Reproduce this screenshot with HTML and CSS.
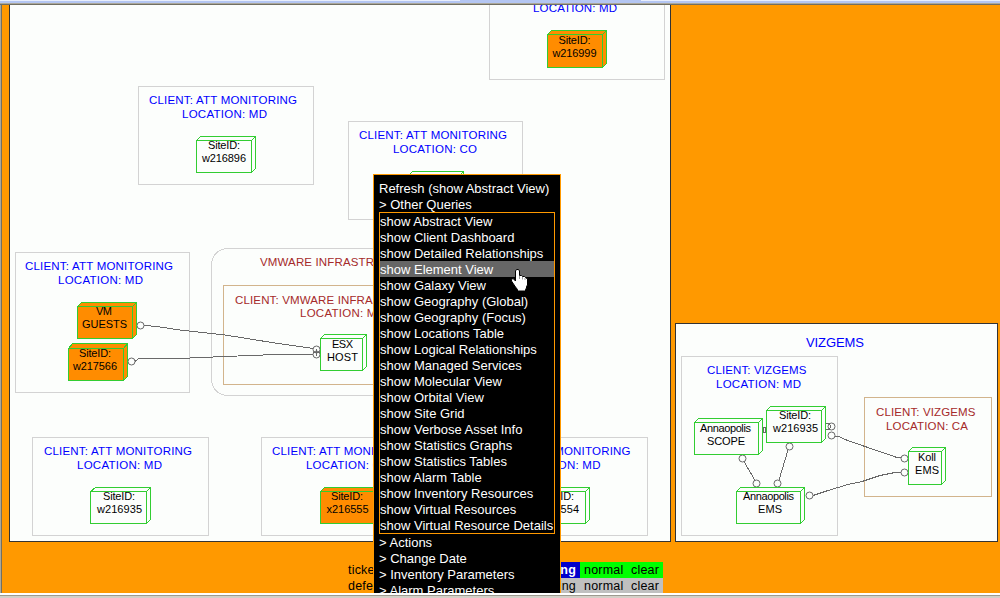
FILE: index.html
```html
<!DOCTYPE html>
<html lang="en">
<head>
<meta charset="utf-8">
<title>Abstract View</title>
<link rel="stylesheet" href="styles.css">
</head>
<body>
<div class="window">
  <div class="topbar"><div class="tab"></div></div>
  <main class="view">
    <svg class="graph" viewBox="2 5 998 557" width="998" height="557">
      <g class="panel">
        <rect x="9.5" y="0.5" width="661" height="541"/>
        <rect x="675.5" y="323.5" width="322" height="218"/>
      </g>
      <g class="group">
        <rect x="489.5" y="0.5" width="175" height="79"/>
        <rect x="138.5" y="86.5" width="175" height="98"/>
        <rect x="348.5" y="121.5" width="174" height="98"/>
        <rect x="15.5" y="252.5" width="174" height="140"/>
        <rect x="211.5" y="248.5" width="230" height="147" rx="16"/>
        <rect x="32.5" y="437.5" width="176" height="98"/>
        <rect x="261.5" y="437.5" width="176" height="98"/>
        <rect x="471.5" y="437.5" width="176" height="98"/>
        <rect x="681.5" y="356.5" width="156" height="179"/>
        <rect class="tan" x="223.5" y="285.5" width="206" height="99"/>
        <rect class="tan" x="864.5" y="397.5" width="127" height="99"/>
      </g>
      <g class="edge">
        <path d="M144 325.5L157 326.5L180 330L225 335L275 343L313 348.5"/>
        <path d="M135 361.5L139 358.5H179L225 356.5L276 354.5H313"/>
        <path d="M744 461.5L755 480.5M788 450L779 480M835 436.5H839L845 439.5L865 446.5L897 457.5H901"/>
        <path d="M813 495.5L828 490.5L848 484.5L862 481.5L880 475.5L895 472.5H901"/>
        <circle cx="140.5" cy="325.5" r="3.5"/><circle cx="131.5" cy="361.5" r="3.5"/>
        <circle cx="316.5" cy="349.5" r="3.5"/><circle cx="316.5" cy="354.5" r="3.5"/>
        <path d="M313 352.5H320M316.5 349V356"/>
        <circle cx="742.5" cy="458.5" r="3.5"/><circle cx="756.5" cy="483.5" r="3.5"/>
        <circle cx="777.5" cy="483.5" r="3.5"/><circle cx="789.5" cy="446.5" r="3.5"/>
        <circle cx="809.5" cy="495.5" r="3.5"/><circle cx="904.5" cy="458.5" r="3.5"/>
        <circle cx="904.5" cy="472.5" r="3.5"/><circle cx="831.5" cy="435.5" r="3.5"/>
        <circle cx="831.5" cy="426.5" r="3.5"/><path d="M826 423.5H829.5L830.5 426.5L829.5 429.5H826"/>
        <rect x="763.5" y="427.5" width="2" height="5"/>
      </g>
      <g class="node">
        <path class="alarm" d="M547.5 34.5L551.5 30.5H606.5V63.5L602.5 67.5H547.5Z"/><path d="M547.5 34.5H602.5V67.5M602.5 34.5L606.5 30.5"/>
        <path d="M196.5 140.5L200.5 136.5H255.5V168.5L251.5 172.5H196.5ZH251.5V172.5M251.5 140.5L255.5 136.5"/>
        <path d="M408.5 175.5L412.5 171.5H463.5V203.5L459.5 207.5H408.5ZH459.5V207.5M459.5 175.5L463.5 171.5"/>
        <path class="alarm" d="M77.5 306.5L81.5 302.5H136.5V334.5L132.5 338.5H77.5Z"/><path d="M77.5 306.5H132.5V338.5M132.5 306.5L136.5 302.5"/>
        <path class="alarm" d="M68.5 348.5L72.5 343.5H127.5V376.5L123.5 380.5H68.5Z"/><path d="M68.5 348.5H123.5V380.5M123.5 348.5L127.5 343.5"/>
        <path d="M320.5 338.5L324.5 334.5H366.5V366.5L362.5 370.5H320.5ZH362.5V370.5M362.5 338.5L366.5 334.5"/>
        <path d="M90.5 491.5L95.5 487.5H150.5V519.5L146.5 523.5H90.5ZH146.5V523.5M146.5 491.5L150.5 487.5"/>
        <path class="alarm" d="M320.5 491.5L324.5 487.5H379.5V519.5L375.5 523.5H320.5ZH375.5V523.5"/>
        <path d="M530.5 491.5L534.5 487.5H589.5V519.5L585.5 523.5H530.5ZH585.5V523.5M585.5 491.5L589.5 487.5"/>
        <path d="M694.5 422.5L698.5 418.5H762.5V450.5L758.5 454.5H694.5ZH758.5V454.5M758.5 422.5L762.5 418.5"/>
        <path d="M766.5 410.5L770.5 406.5H825.5V438.5L821.5 442.5H766.5ZH821.5V442.5M821.5 410.5L825.5 406.5"/>
        <path d="M736.5 491.5L740.5 487.5H804.5V519.5L800.5 523.5H736.5ZH800.5V523.5M800.5 491.5L804.5 487.5"/>
        <path d="M908.5 451.5L912.5 447.5H945.5V480.5L941.5 484.5H908.5ZH941.5V484.5M941.5 451.5L945.5 447.5"/>
      </g>
      <g class="title">
        <text x="533" y="12" textLength="84">LOCATION: MD</text>
        <text x="149" y="104" textLength="148">CLIENT: ATT MONITORING</text>
        <text x="182" y="118" textLength="85">LOCATION: MD</text>
        <text x="359" y="139" textLength="148">CLIENT: ATT MONITORING</text>
        <text x="393" y="153" textLength="84">LOCATION: CO</text>
        <text x="25" y="270" textLength="148">CLIENT: ATT MONITORING</text>
        <text x="58" y="284" textLength="85">LOCATION: MD</text>
        <text x="44" y="455" textLength="148">CLIENT: ATT MONITORING</text>
        <text x="77" y="469" textLength="85">LOCATION: MD</text>
        <text x="272" y="455" textLength="148">CLIENT: ATT MONITORING</text>
        <text x="306" y="469" textLength="84">LOCATION: CO</text>
        <text x="482.5" y="455" textLength="148">CLIENT: ATT MONITORING</text>
        <text x="515.5" y="469" textLength="85">LOCATION: MD</text>
        <text class="big" x="806" y="347" textLength="58">VIZGEMS</text>
        <text x="707" y="374" textLength="99.5">CLIENT: VIZGEMS</text>
        <text x="716" y="388" textLength="85">LOCATION: MD</text>
        <g class="red">
          <text class="wide" x="260" y="266">VMWARE INFRASTRUCTURE</text>
          <text class="wide" x="235" y="304">CLIENT: VMWARE INFRASTRUCTURE</text>
          <text x="300" y="317" textLength="85">LOCATION: MD</text>
          <text x="876" y="416" textLength="99.5">CLIENT: VIZGEMS</text>
          <text x="886" y="430" textLength="82">LOCATION: CA</text>
        </g>
      </g>
      <g class="label">
        <text x="558.5" y="44" textLength="32">SiteID:</text><text x="552.5" y="57" textLength="44">w216999</text>
        <text x="208" y="149" textLength="32">SiteID:</text><text x="202" y="162" textLength="44">w216896</text>
        <text x="96" y="315" textLength="16">VM</text><text x="82" y="328" textLength="45">GUESTS</text>
        <text x="79" y="357" textLength="32">SiteID:</text><text x="73" y="370" textLength="44">w217566</text>
        <text x="332" y="348" textLength="21">ESX</text><text x="327" y="361" textLength="31">HOST</text>
        <text x="103" y="500" textLength="32">SiteID:</text><text x="97" y="513" textLength="45">w216935</text>
        <text x="331" y="500" textLength="32">SiteID:</text><text x="326.5" y="513" textLength="42">x216555</text>
        <text x="542" y="500" textLength="32">SiteID:</text><text x="536" y="513" textLength="43">x216554</text>
        <text x="700" y="432" textLength="51">Annaopolis</text><text x="707" y="445" textLength="38">SCOPE</text>
        <text x="779" y="419" textLength="32">SiteID:</text><text x="773" y="432" textLength="45">w216935</text>
        <text x="743" y="500" textLength="51">Annaopolis</text><text x="758" y="513" textLength="24">EMS</text>
        <text x="918" y="461" textLength="18">Koll</text><text x="915" y="474" textLength="24">EMS</text>
      </g>
    </svg>
    <div class="legend">
      <div class="row"><span class="name">ticketed</span><span class="warn bold">warning</span><span class="ok">normal</span><span class="ok end">clear</span></div>
      <div class="row"><span class="name">deferred</span><span class="off w">warning</span><span class="off">normal</span><span class="off end">clear</span></div>
    </div>
  </main>
  <div class="statusbar"></div>

  <nav class="menu">
    <div class="item">Refresh (show Abstract View)</div>
    <div class="item">&gt; Other Queries</div>
    <div class="submenu">
      <div class="item">show Abstract View</div>
      <div class="item">show Client Dashboard</div>
      <div class="item">show Detailed Relationships</div>
      <div class="item hover">show Element View</div>
      <div class="item">show Galaxy View</div>
      <div class="item">show Geography (Global)</div>
      <div class="item">show Geography (Focus)</div>
      <div class="item">show Locations Table</div>
      <div class="item">show Logical Relationships</div>
      <div class="item">show Managed Services</div>
      <div class="item">show Molecular View</div>
      <div class="item">show Orbital View</div>
      <div class="item">show Site Grid</div>
      <div class="item">show Verbose Asset Info</div>
      <div class="item">show Statistics Graphs</div>
      <div class="item">show Statistics Tables</div>
      <div class="item">show Alarm Table</div>
      <div class="item">show Inventory Resources</div>
      <div class="item">show Virtual Resources</div>
      <div class="item">show Virtual Resource Details</div>
    </div>
    <div class="item">&gt; Actions</div>
    <div class="item">&gt; Change Date</div>
    <div class="item">&gt; Inventory Parameters</div>
    <div class="item">&gt; Alarm Parameters</div>
  </nav>
  <svg class="cursor" viewBox="0 0 18 23" width="18" height="23">
    <path d="M4.5 2L5.5 0.5H7.5L8.5 2V6.5H10.5L11.5 7.5H13.5L14.5 8.5L16.5 10V16L15.5 17.5V19L14.5 20.5V22H6.500V20.500L4.500 18L2.500 15L0.500 12V10.500L2 9.500L4.500 12Z"/>
    <path class="crease" d="M8.500 7V10M11.500 8V10.500M14 9V11"/>
  </svg>
</div>
</body>
</html>
```

FILE: styles.css
```css
body {
  margin: 0;
  background: #d4d0c8;
  font-family: "Liberation Sans", Arial, sans-serif;
  font-size: 13px;
}
.window {
  position: relative;
  width: 1000px;
  height: 598px;
  overflow: hidden;
}
.topbar {
  box-sizing: border-box;
  height: 5px;
  background: linear-gradient(#e8eefc 1px, #b4c6f2 1px);
  border-bottom: 1px solid #716f64;
  box-shadow: inset 0 -1px #aca899;
}
.tab {
  width: 181px;
  height: 1px;
  margin-left: 460px;
  background: #b4c6f2;
}
.view {
  box-sizing: border-box;
  height: 588px;
  border-left: 1px solid #aca899;
  box-shadow: inset 1px 0 #716f64;
  padding-left: 1px;
  background: #ff9900;
  overflow: hidden;
}
.graph { display: block; }
.graph rect, .node path, .edge path { shape-rendering: crispEdges; }
.panel rect { fill: #fcfefc; stroke: #333; }
.group rect { fill: none; stroke: #d3d3d3; }
.group .tan { stroke: #d2b48c; }
.edge { fill: none; stroke: #696969; }
.node path { fill: none; stroke: #32cd32; }
.node .alarm { fill: #ff8c00; }
.title { font-size: 11.5px; fill: #0000ff; }
.title .big { font-size: 13px; }
.title .red { fill: #a52a2a; }
.title .wide { letter-spacing: 0.14px; }
.label { font-size: 11px; fill: #000; }

.legend {
  width: 315px;
  margin-left: 346px;
}
.row {
  display: grid;
  grid-template-columns: 1fr 60px 46px 37px;
  height: 16px;
  line-height: 16px;
  font-size: 12.5px;
  letter-spacing: 0.2px;
}
.row span { padding-left: 4px; }
.row .name { padding-left: 0; }
.row .end { padding-left: 5px; }
.warn { background: #0000cd; color: #fff; }
.row .warn, .row .w { padding: 0 4px 0 0; text-align: right; }
.bold { font-weight: bold; }
.ok { background: #00ff00; }
.off { background: #c0c0c0; }

.statusbar {
  height: 5px;
  background: linear-gradient(#fff 2px, #9d9a8f 2px, #9d9a8f 3px, #d4d0c8 3px);
}

.menu {
  position: absolute;
  box-sizing: border-box;
  left: 373px;
  top: 174px;
  width: 188px;
  height: 419px;
  padding: 5px 5px 0;
  border: 1px solid #ff9900;
  border-bottom: 0;
  background: #000;
  color: #fff;
  overflow: hidden;
}
.item {
  height: 16px;
  line-height: 17px;
  white-space: nowrap;
}
.submenu { border: 1px solid #ff9900; }
.hover { background: #666; }
.cursor {
  position: absolute;
  left: 511px;
  top: 269px;
  fill: #fff;
  stroke: #000;
}
.cursor .crease { stroke-width: 0.4; }
```
